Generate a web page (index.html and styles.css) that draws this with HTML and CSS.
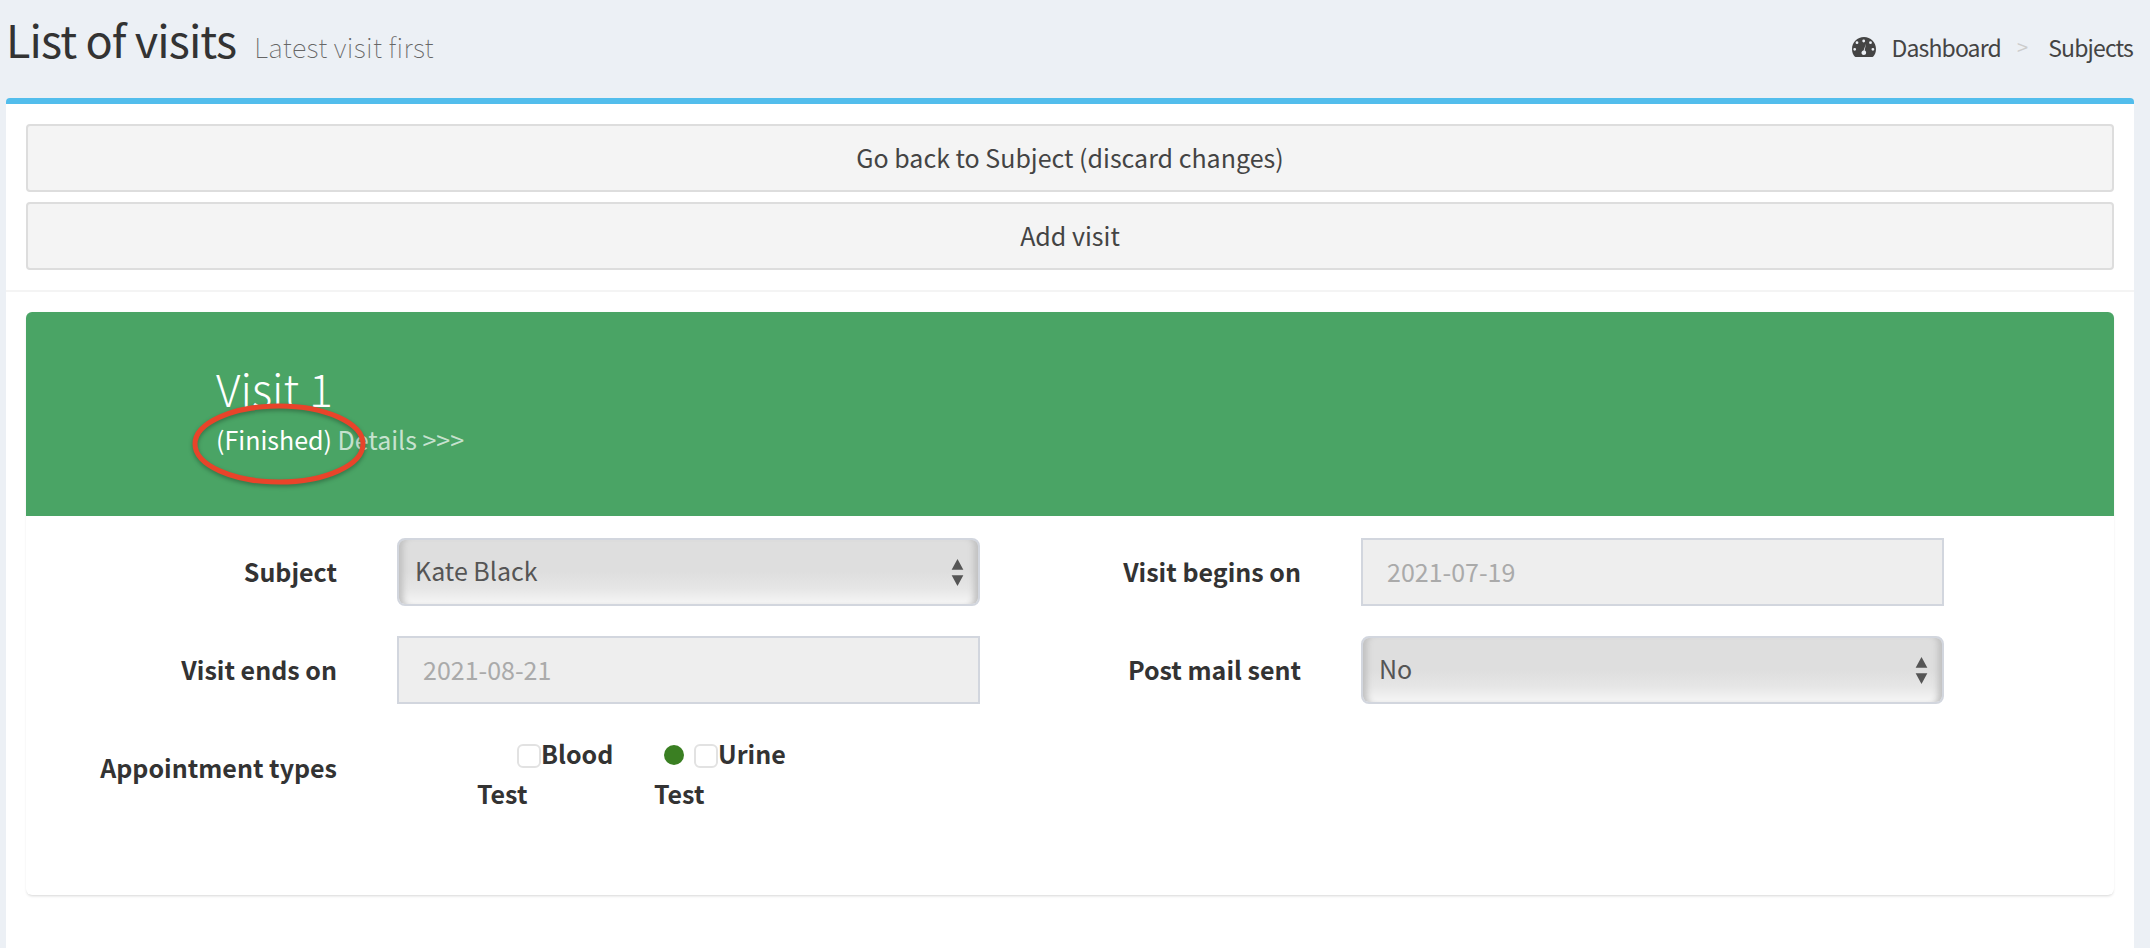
FILE: index.html
```html
<!DOCTYPE html>
<html lang="en">
<head>
<meta charset="utf-8">
<title>List of visits</title>
<link rel="stylesheet" href="styles.css">
</head>
<body>
<header class="page-header">
  <h1 class="title">List of visits <small class="subtitle">Latest visit first</small></h1>
  <nav class="crumbs">
    <svg class="gauge" viewBox="0 0 24 20" aria-hidden="true"><path fill-rule="evenodd" d="M12 0C5.400 0 0 5.400 0 12c0 2.900 1 5.600 2.700 7.600.2.300.5.400.8.400h17c.3 0 .6-.1.8-.4C23 17.600 24 14.900 24 12 24 5.400 18.600 0 12 0zM11.700 2.600a1.400 1.400 0 1 1 0 2.800 1.400 1.400 0 0 1 0-2.800zM5 4.300a1.400 1.400 0 1 1 0 2.800 1.400 1.400 0 0 1 0-2.800zM2.700 10.900a1.400 1.400 0 1 1 0 2.800 1.400 1.400 0 0 1 0-2.800zM20.900 10.900a1.400 1.400 0 1 1 0 2.800 1.400 1.400 0 0 1 0-2.800zM18.500 4.300a1.400 1.400 0 1 1 0 2.800 1.400 1.400 0 0 1 0-2.800zM14 6.800l-1.400 6.700c1 .4 1.500 1.200 1.500 2.200 0 1.300-1 2.300-2.300 2.300s-2.300-1-2.300-2.300c0-1.200.9-2.200 2.100-2.300z"/></svg>
    <a class="crumb">Dashboard</a>
    <span class="sep">&gt;</span>
    <a class="crumb">Subjects</a>
  </nav>
</header>

<main class="box">
  <div class="box-actions">
    <button class="btn" type="button">Go back to Subject (discard changes)</button>
    <button class="btn" type="button">Add visit</button>
  </div>
  <section class="visit">
    <div class="banner">
      <h2 class="visit-title">Visit 1</h2>
      <p class="visit-status">(Finished) <a class="details">Details &gt;&gt;&gt;</a></p>
    </div>
    <svg class="annotation" viewBox="0 0 180 90" aria-hidden="true">
      <ellipse cx="90" cy="45" rx="84" ry="38"/>
    </svg>
    <form class="form">
      <label class="label">Subject</label>
      <div class="select-wrap">
        <select class="select"><option>Kate Black</option></select>
        <svg class="arrows" viewBox="0 0 14 30" aria-hidden="true"><path d="M7 0l6.500 12H.5zM7 30L.5 18h13z"/></svg>
      </div>
      <label class="label">Visit begins on</label>
      <input class="input" type="text" value="2021-07-19" disabled>

      <label class="label">Visit ends on</label>
      <input class="input" type="text" value="2021-08-21" disabled>
      <label class="label">Post mail sent</label>
      <div class="select-wrap">
        <select class="select"><option>No</option></select>
        <svg class="arrows" viewBox="0 0 14 30" aria-hidden="true"><path d="M7 0l6.500 12H.5zM7 30L.5 18h13z"/></svg>
      </div>

      <label class="label label-types">Appointment types</label>
      <div class="types">
        <div class="type"><span class="dot dot-off"></span><input class="check" type="checkbox"><span>Blood Test</span></div>
        <div class="type"><span class="dot"></span><input class="check" type="checkbox"><span>Urine Test</span></div>
      </div>
    </form>
  </section>
</main>
</body>
</html>
```
FILE: styles.css
```css
* { box-sizing: border-box; }
html, body { margin: 0; padding: 0; }
body {
  background: #ecf0f5;
  font-family: "Noto Sans CJK SC", "Noto Sans", sans-serif;
  color: #333;
  height: 948px;
  overflow: hidden;
}
.page-header {
  height: 98px;
  display: flex;
  justify-content: space-between;
  align-items: flex-start;
  padding: 10px 17px 0 6px;
}
.title {
  margin: 0;
  font-size: 45px;
  line-height: 58px;
  font-weight: 400;
  letter-spacing: -.9px;
  color: #333;
}
.subtitle {
  font-size: 27px;
  font-weight: 100;
  letter-spacing: .35px;
  color: #666;
  margin-left: 9px;
}
.crumbs {
  display: flex;
  align-items: center;
  margin-top: 19px;
  font-size: 23px;
  line-height: 36px;
  letter-spacing: -.85px;
  color: #444;
}
.gauge { width: 24px; height: 20px; fill: #444; margin-right: 15px; }
.sep { color: #ccc; margin: 0 21px 0 16px; font-size: 20px; }
.box {
  margin: 0 16px 0 6px;
  height: 850px;
  background: #fff;
  border-top: 6px solid #52bdec;
  border-radius: 4px 4px 0 0;
}
.box-actions {
  display: flex;
  flex-direction: column;
  gap: 10px;
  padding: 20px;
  border-bottom: 2px solid #f4f4f4;
}
.btn {
  height: 68px;
  font: inherit;
  font-size: 25px;
  padding-bottom: 4px;
  color: #444;
  background: #f4f4f4;
  border: 2px solid #ddd;
  border-radius: 4px;
}
.visit {
  position: relative;
  margin: 20px 20px 0 20px;
  height: 583px;
  border-radius: 6px;
  box-shadow: 0 2px 3px -1px rgba(0,0,0,.16), 0 0 1px rgba(0,0,0,.06);
}
.banner {
  height: 204px;
  background: #4aa465;
  color: #fff;
  border-radius: 6px 6px 0 0;
  padding: 43px 0 0 190px;
}
.visit-title {
  margin: 0;
  font-size: 44.500px;
  line-height: 66px;
  font-weight: 200;
}
.visit-status {
  margin: 0;
  font-size: 25px;
  line-height: 36px;
  font-weight: 400;
}
.details { color: rgba(255,255,255,.7); }
.annotation {
  position: absolute;
  left: 163px;
  top: 87px;
  width: 180px;
  height: 90px;
  overflow: visible;
  filter: drop-shadow(0 2px 2px rgba(0,0,0,.3));
}
.annotation ellipse { fill: none; stroke: #e8442a; stroke-width: 5; }
.form {
  display: grid;
  grid-template-columns: 310px 643px 321px 643px;
  grid-auto-rows: 68px;
  row-gap: 30px;
  padding-top: 22px;
  align-items: center;
}
.label {
  font-weight: 700;
  font-size: 25px;
  line-height: 36px;
  text-align: right;
  padding-bottom: 2px;
  margin-right: -1px;
  color: #333;
}
.input, .select-wrap { margin-left: 61px; width: 583px; height: 68px; }
.input {
  font: inherit;
  font-size: 25px;
  color: #aaa;
  background: #eee;
  border: 2px solid #d2d6de;
  padding: 0 24px 2px;
}
.select-wrap { position: relative; }
.select {
  appearance: none;
  -webkit-appearance: none;
  width: 100%;
  height: 100%;
  font: inherit;
  font-size: 25px;
  color: #555;
  padding: 0 40px 5px 16px;
  border: 2px solid #d2d6de;
  border-radius: 8px;
  background: linear-gradient(#dedede 0, #dedede 50%, #e6e6e6 76%, #f3f3f3 96%);
  box-shadow: inset 9px 0 6px -5px #c0c0c0, inset -9px 0 6px -5px #c0c0c0;
}
.arrows { position: absolute; right: 16px; top: 21px; width: 13px; height: 27px; fill: #555; }
.label-types { align-self: start; padding-top: 15px; }
.types {
  display: flex;
  margin-left: 141px;
  align-self: start;
  height: 90px;
}
.type {
  width: 177px;
  font-weight: 700;
  font-size: 25px;
  line-height: 40px;
  margin-top: -1px;
}
.dot {
  display: inline-block;
  width: 20px;
  height: 20px;
  margin: 0 10px;
  border-radius: 50%;
  background: #3a7f22;
  vertical-align: -1px;
}
.dot-off { background: transparent; }
.check {
  appearance: none;
  -webkit-appearance: none;
  width: 24px;
  height: 24px;
  margin: 0;
  background: #fff;
  border: 2px solid #e2e2e2;
  border-radius: 6px;
  vertical-align: -4px;
}
```
